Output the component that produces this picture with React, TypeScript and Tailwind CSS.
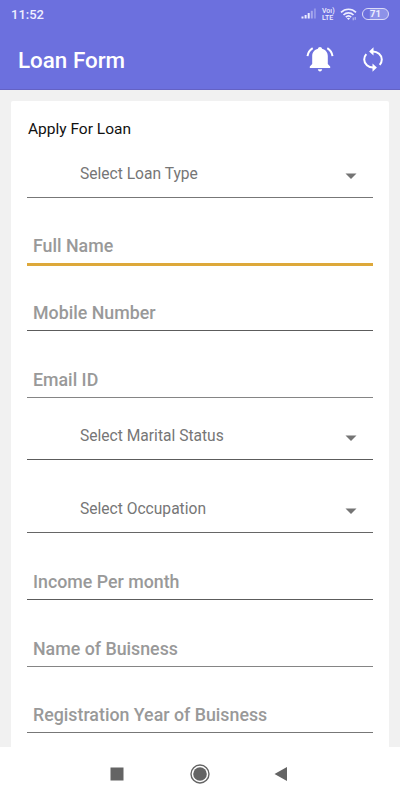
import React from 'react'

interface Field {
  label: string
  kind: 'input' | 'select'
  row: string
  line: string
}

const fields: Field[] = [
  { label: 'Select Loan Type', kind: 'select', row: 'h-[58px]', line: 'border-b border-[#777777]' },
  { label: 'Full Name', kind: 'input', row: 'h-[68px]', line: 'border-b-[3px] border-[#dda83a]' },
  { label: 'Mobile Number', kind: 'input', row: 'h-[65px]', line: 'border-b border-[#5c5c5c]' },
  { label: 'Email ID', kind: 'input', row: 'h-[67px]', line: 'border-b border-[#858585]' },
  { label: 'Select Marital Status', kind: 'select', row: 'h-[62px]', line: 'border-b border-[#5c5c5c]' },
  { label: 'Select Occupation', kind: 'select', row: 'h-[73px]', line: 'border-b border-[#666666]' },
  { label: 'Income Per month', kind: 'input', row: 'h-[67px]', line: 'border-b border-[#5c5c5c]' },
  { label: 'Name of Buisness', kind: 'input', row: 'h-[67px]', line: 'border-b border-[#858585]' },
  { label: 'Registration Year of Buisness', kind: 'input', row: 'h-[66px]', line: 'border-b border-[#777777]' }
]

function StatusBar() {
  return (
    <div className="flex h-7 items-center justify-between pl-[11px] pr-[11px] text-[#eeeeff]">
      <span className="pt-px text-[13px] leading-7 font-medium">11:52</span>
      <div className="flex items-center">
        {/* Signal */}
        <svg className="h-3 w-4" viewBox="0 0 16 12" fill="currentColor">
          <rect x="0.5" y="8.5" width="2" height="2" />
          <rect x="3.6" y="7" width="2" height="3.5" />
          <rect x="6.7" y="5" width="2" height="5.5" />
          <rect x="9.8" y="2.8" width="2" height="7.7" opacity="0.45" />
          <rect x="12.9" y="0.5" width="2" height="10" opacity="0.3" />
        </svg>
        <div className="ml-[5px] flex w-[13px] flex-col text-[7px] font-medium">
          <span className="h-[6px] leading-[6px] whitespace-nowrap">Voı)</span>
          <span className="mt-px h-[6px] leading-[6px]">LTE</span>
        </div>
        {/* Wifi */}
        <svg className="ml-[5px] h-[13px] w-[17px]" viewBox="0 0 17 13" fill="none" stroke="currentColor" strokeWidth="1.7">
          <path d="M1 4.4C5.2 0.2 11.8 0.2 16 4.4" />
          <path d="M3.5 7C6.3 4.2 10.7 4.2 13.5 7" />
          <path d="M5.8 9.2C7.4 7.7 9.6 7.7 11.2 9.2" />
          <path d="M8.5 12L6.9 10.3Q8.5 9 10.1 10.3Z" fill="currentColor" stroke="none" />
          <path d="M13.2 9.5V12.3M15.2 9V11.8" strokeWidth="1" opacity="0.7" />
        </svg>
        <div className="ml-[5px] flex h-3 w-[27px] items-center justify-center rounded-full border-[1.5px] border-[#dcdcf8] bg-linear-to-r from-transparent from-25% via-[#8d92e8] via-30% to-[#8d92e8] to-75%">
          <span className="text-[9.5px] leading-none font-bold">71</span>
        </div>
      </div>
    </div>
  )
}

function AppBar() {
  return (
    <div className="flex h-[62px] items-center pl-[18px] pr-[15px] text-white">
      <h1 className="flex-1 pt-[3px] text-[22.4px] leading-[59px] font-medium">Loan Form</h1>
      <svg className="h-7 w-7" viewBox="0 0 28 28" fill="currentColor">
        <path d="M14 1.9c-1.1 0-2 .7-2 1.8-3.8.9-5.8 3.8-5.8 7.4v8L3.8 21.600v1.400h20.400v-1.400l-2.400-2.500v-8c0-3.600-2-6.500-5.800-7.400 0-1.100-.9-1.800-2-1.800z" />
        <path d="M11.9 24.3h4.200c0 1.200-.9 2.100-2.100 2.100s-2.100-.9-2.100-2.100z" />
        <path d="M6.700 3.200C3.800 5 2 7.800 1.500 11.200M21.300 3.200C24.200 5 26 7.800 26.500 11.200" fill="none" stroke="currentColor" strokeWidth="2" />
      </svg>
      <svg className="ml-[27px] h-[25px] w-6" viewBox="0 0 24 25" fill="none" stroke="currentColor" strokeWidth="2">
        <path d="M12 4.4C16.5 4.4 20.8 8 20.8 12.5C20.8 14.4 20 16.4 18.7 17.9M12 20.6C7.5 20.6 3.2 16.9 3.2 12.4C3.2 10.5 4 8.5 5.3 7.1" />
        <path d="M12.5 0.2V8.6L8.1 4.4ZM11.5 16.4V24.8L15.9 20.6Z" fill="currentColor" stroke="none" />
      </svg>
    </div>
  )
}

function FormField({ field }: { field: Field }) {
  if (field.kind === 'select') {
    return (
      <div className={`flex items-end ${field.row} ${field.line}`}>
        <span className="flex-1 pb-[13px] pl-[53px] text-[15.6px] leading-5 text-[#767676]">{field.label}</span>
        <svg className="mr-4 mb-[18px] h-[6px] w-3" viewBox="0 0 12 6" fill="#747474">
          <path d="M0.5 0.5H11.5L6 6Z" />
        </svg>
      </div>
    )
  }
  return (
    <div className={`flex items-end pl-[6px] ${field.row} ${field.line}`}>
      <span className="pb-[7px] text-[17.8px] leading-5 font-medium text-[#999999]">{field.label}</span>
    </div>
  )
}

function NavBar() {
  return (
    <div className="flex h-[53px] items-center justify-center bg-white text-[#646464]">
      <svg className="h-5 w-[180px]" viewBox="0 0 180 20" fill="currentColor">
        <rect x="0.5" y="3.5" width="13" height="13" />
        <circle cx="90" cy="10" r="9" fill="none" stroke="currentColor" strokeWidth="1.4" />
        <circle cx="90" cy="10" r="6.8" />
        <path d="M164.5 10L177 3V17Z" />
      </svg>
    </div>
  )
}

export default function App() {
  return (
    <div className="flex h-[800px] w-[400px] flex-col overflow-hidden bg-[#f1f1f1] font-[Roboto,sans-serif]">
      <header className="h-[90px] shrink-0 border-b border-[#6462c4] bg-[#6c70de]">
        <StatusBar />
        <AppBar />
      </header>
      <main className="flex min-h-0 flex-1 px-[11px] pt-[11px]">
        <div className="flex-1 rounded-t-[2px] bg-white px-4">
          <h2 className="h-[39px] pt-[18px] pl-[1px] text-[15.5px] leading-5 text-[#111111]">Apply For Loan</h2>
          {fields.map((field) => (
            <FormField key={field.label} field={field} />
          ))}
        </div>
      </main>
      <NavBar />
    </div>
  )
}
